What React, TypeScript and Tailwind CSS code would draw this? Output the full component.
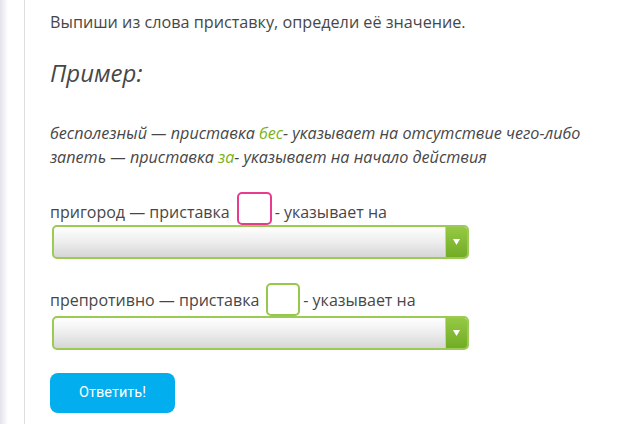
import React from "react";

function Select() {
  return (
    <div className="ml-[2px] flex h-[34px] w-[417px] overflow-hidden rounded-[5px] border-2 border-[#9ccb55] bg-gradient-to-b from-white via-[#ededed] to-[#d6d6d6]">
      <div className="flex-1 border-r border-[#c9c9c9]" />
      <div className="flex w-[21px] items-center justify-center bg-gradient-to-b from-[#95c944] to-[#72ac25]">
        <svg width="7" height="6" viewBox="0 0 7 6">
          <path d="M0 0 L7 0 L3.5 6 Z" fill="#ffffff" />
        </svg>
      </div>
    </div>
  );
}

export default function App() {
  return (
    <div
      className="relative h-[424px] w-[640px] overflow-hidden bg-white text-[#474747]"
      style={{ fontFamily: '"Open Sans", "Noto Sans", sans-serif' }}
    >
      <div className="absolute left-0 top-0 h-full w-[8px] bg-gradient-to-r from-[#e2e2ec] to-white" />
      <div className="absolute left-[24px] top-0 h-full w-px bg-[#dedede]" />
      <div className="flex flex-col pl-[50px] pt-[10px]">
        <div className="text-[16.2px] leading-[24px]">Выпиши из слова приставку, определи её значение.</div>
        <div className="mt-[23px] text-[24px] italic leading-[32px]">Пример:</div>
        <div className="mt-[32px] text-[16.15px] italic leading-[24px]">
          <div>
            бесполезный — приставка <span className="text-[#7ab317]">бес</span>- указывает на отсутствие чего-либо
          </div>
          <div>
            запеть — приставка <span className="text-[#7ab317]">за</span>- указывает на начало действия
          </div>
        </div>
        <div className="mt-[23px] flex h-[33px] items-start text-[16px] leading-[24px]">
          <span className="mt-[8px]">пригород — приставка</span>
          <span className="ml-[7px] mr-[3px] box-border h-[33px] w-[35px] rounded-[5px] border-2 border-[#e83a8e] bg-white" />
          <span className="mt-[8px]">- указывает на</span>
        </div>
        <Select />
        <div className="mt-[24px] flex h-[33px] items-start text-[16px] leading-[24px]">
          <span className="mt-[5px]">препротивно — приставка</span>
          <span className="ml-[7px] mr-[3px] box-border h-[33px] w-[34px] rounded-[5px] border-2 border-[#96c84c] bg-white" />
          <span className="mt-[5px]">- указывает на</span>
        </div>
        <Select />
        <button
          className="mt-[23px] flex h-[40px] w-[125px] items-center justify-center rounded-[8px] bg-[#03aeef] text-[14.5px] text-white"
          style={{ fontFamily: "Roboto, sans-serif" }}
        >
          Ответить!
        </button>
      </div>
    </div>
  );
}
